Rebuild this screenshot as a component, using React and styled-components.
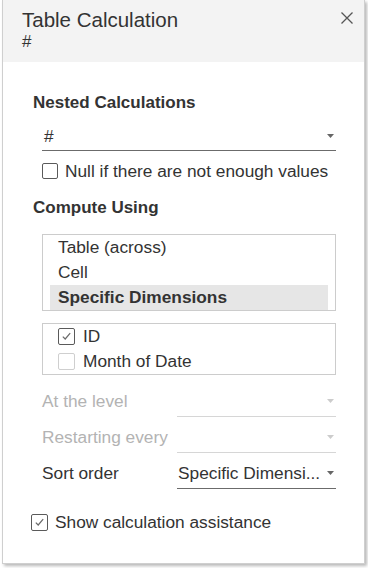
import React from "react";
import styled, { createGlobalStyle } from "styled-components";

const GlobalStyle = createGlobalStyle`
  html, body {
    margin: 0;
    padding: 0;
    background: #fff;
  }
  body {
    font-family: "Liberation Sans", Arial, sans-serif;
    color: #333;
  }
`;

const Page = styled.div`
  width: 368px;
  height: 568px;
  padding-left: 2px;
  box-sizing: border-box;
  overflow: hidden;
`;

const Panel = styled.div`
  width: 363px;
  height: 564px;
  box-sizing: border-box;
  background: #fff;
  border: 1px solid #cfcfcf;
  border-top: none;
  box-shadow: 2px 2px 3px rgba(0, 0, 0, 0.28);
  display: flex;
  flex-direction: column;
`;

const Header = styled.div`
  height: 62px;
  box-sizing: border-box;
  background: #f3f3f3;
  padding: 8px 11px 0 19px;
  display: flex;
  justify-content: space-between;
  align-items: flex-start;
`;

const Title = styled.div`
  font-size: 20.5px;
  line-height: 24px;
  color: #333;
`;

const Subtitle = styled.div`
  font-size: 17px;
  line-height: 20px;
  color: #333;
`;

const Close = styled.button`
  margin-top: 4px;
  padding: 0;
  border: none;
  background: none;
  width: 12px;
  height: 12px;
  display: flex;
  cursor: pointer;
`;

const Body = styled.div`
  padding: 30px 28px 0 28px;
  display: flex;
  flex-direction: column;
`;

const Heading = styled.div`
  margin-top: ${(p) => p.$top || 0}px;
  padding-left: 2px;
  font-size: 17px;
  font-weight: 700;
  line-height: 22px;
  color: #333;
`;

const Indent = styled.div`
  margin-left: 11px;
  margin-top: ${(p) => p.$top || 0}px;
  display: flex;
  flex-direction: column;
  gap: ${(p) => p.$gap || 0}px;
`;

const Select = styled.div`
  height: ${(p) => p.$h || 31}px;
  box-sizing: border-box;
  padding: 0 2px 0 ${(p) => p.$padLeft ?? 2}px;
  border-bottom: 1px solid ${(p) => (p.$disabled ? "#d6d6d6" : "#6b6b6b")};
  display: flex;
  align-items: center;
  justify-content: space-between;
  font-size: 17.3px;
  color: #333;
  white-space: nowrap;
`;

const CheckRow = styled.label`
  margin-top: ${(p) => p.$top || 0}px;
  margin-left: ${(p) => p.$left || 0}px;
  height: ${(p) => p.$h || 22}px;
  display: flex;
  align-items: center;
  gap: ${(p) => p.$gap || 7}px;
  font-size: 17.3px;
  color: #333;
  white-space: nowrap;
`;

const Box = styled.span`
  width: ${(p) => p.$size}px;
  height: ${(p) => p.$size}px;
  box-sizing: border-box;
  border: 1px solid ${(p) => (p.$light ? "#cfcfcf" : "#5a5a5a")};
  border-radius: 2px;
  background: #fff;
  display: flex;
  align-items: center;
  justify-content: center;
  flex-shrink: 0;
`;

const ListBox = styled.div`
  margin-top: ${(p) => p.$top || 0}px;
  border: 1px solid #cccccc;
  padding: ${(p) => p.$pad || "0 7px"};
  display: flex;
  flex-direction: column;
`;

const Item = styled.div`
  height: 25px;
  line-height: 25px;
  padding-left: 8px;
  font-size: 17.3px;
  font-weight: ${(p) => (p.$selected ? 700 : 400)};
  background: ${(p) => (p.$selected ? "#e6e6e6" : "transparent")};
  color: #333;
  white-space: nowrap;
`;

const FieldRow = styled.div`
  display: grid;
  grid-template-columns: 135px 1fr;
  align-items: end;
`;

const FieldLabel = styled.div`
  height: 31px;
  line-height: 30px;
  font-size: 17.3px;
  color: ${(p) => (p.$disabled ? "#b3b3b3" : "#333")};
  white-space: nowrap;
`;

const Caret = ({ disabled }) => (
  <svg width="7" height="4" viewBox="0 0 7 4">
    <path d="M0 0 L7 0 L3.5 4 Z" fill={disabled ? "#cccccc" : "#666"} />
  </svg>
);

const Check = () => (
  <svg width="13" height="13" viewBox="0 0 13 13">
    <polyline
      points="2.8,6.6 5.2,9 10.2,3.2"
      fill="none"
      stroke="#6a6a6a"
      strokeWidth="1.2"
    />
  </svg>
);

const Checkbox = ({ checked, light, size = 17 }) => (
  <Box $size={size} $light={light}>
    {checked && <Check />}
  </Box>
);

const Field = ({ label, value, disabled }) => (
  <FieldRow>
    <FieldLabel $disabled={disabled}>{label}</FieldLabel>
    <Select $disabled={disabled} $padLeft={1}>
      <span>{value}</span>
      <Caret disabled={disabled} />
    </Select>
  </FieldRow>
);

export default function App() {
  return (
    <Page>
      <GlobalStyle />
      <Panel>
        <Header>
          <div>
            <Title>Table Calculation</Title>
            <Subtitle>#</Subtitle>
          </div>
          <Close aria-label="Close">
            <svg width="12" height="12" viewBox="0 0 12 12">
              <path
                d="M0.5 0.5 L11.5 11.5 M11.5 0.5 L0.5 11.5"
                stroke="#555"
                strokeWidth="1.3"
              />
            </svg>
          </Close>
        </Header>

        <Body>
          <Heading>Nested Calculations</Heading>
          <Indent $top={8}>
            <Select $h={29}>
              <span>#</span>
              <Caret />
            </Select>
            <CheckRow $top={9}>
              <Checkbox size={16} />
              Null if there are not enough values
            </CheckRow>
          </Indent>

          <Heading $top={15}>Compute Using</Heading>
          <Indent $top={15}>
            <ListBox>
              <Item>Table (across)</Item>
              <Item>Cell</Item>
              <Item $selected>Specific Dimensions</Item>
            </ListBox>
            <ListBox $top={12} $pad="0 0 0 15px">
              <CheckRow $h={25} $gap={8}>
                <Checkbox checked />
                ID
              </CheckRow>
              <CheckRow $h={25} $gap={8}>
                <Checkbox light />
                Month of Date
              </CheckRow>
            </ListBox>
          </Indent>

          <Indent $top={11} $gap={5}>
            <Field label="At the level" disabled />
            <Field label="Restarting every" disabled />
            <Field label="Sort order" value="Specific Dimensi..." />
          </Indent>

          <CheckRow $top={22}>
            <Checkbox checked />
            Show calculation assistance
          </CheckRow>
        </Body>
      </Panel>
    </Page>
  );
}
